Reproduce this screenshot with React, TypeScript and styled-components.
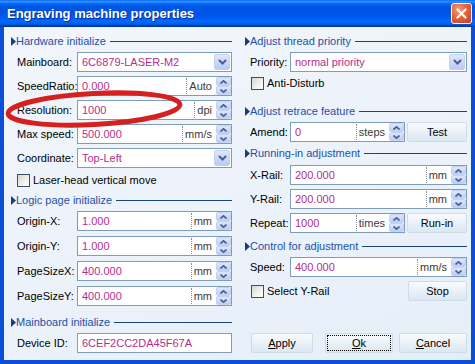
import React from "react";
import styled, { createGlobalStyle } from "styled-components";

const GlobalStyle = createGlobalStyle`
  html, body {
    margin: 0;
    padding: 0;
    background: #fff;
  }
  body {
    font-family: "Liberation Sans", Arial, sans-serif;
    font-size: 11px;
    color: #000;
  }
`;

const Window = styled.div`
  position: relative;
  width: 475px;
  height: 364px;
  display: flex;
  flex-direction: column;
  overflow: hidden;
  background: #0a4fd6;
`;

const TitleBar = styled.div`
  height: 27px;
  flex-shrink: 0;
  display: flex;
  align-items: center;
  justify-content: space-between;
  padding: 0 3px 0 7px;
  background: linear-gradient(
    to bottom,
    #0058ee 0%,
    #3593ff 4%,
    #288eff 7%,
    #127dff 10%,
    #036ffc 13%,
    #0262ee 17%,
    #0057e5 24%,
    #0054e3 30%,
    #0055eb 56%,
    #005bf5 68%,
    #026afe 78%,
    #0062ef 86%,
    #0052d6 92%,
    #0040ab 96%,
    #003092 100%
  );
`;

const Title = styled.span`
  color: #fff;
  font-weight: bold;
  font-size: 13px;
  text-shadow: 1px 1px 0 #0a2a8a;
  white-space: nowrap;
`;

const CloseButton = styled.div`
  width: 21px;
  height: 21px;
  box-sizing: border-box;
  border: 1px solid #fff;
  border-radius: 3px;
  background: radial-gradient(circle at 35% 30%, #f39b7d 0%, #e2643e 45%, #c63c17 100%);
  display: flex;
  align-items: center;
  justify-content: center;
`;

const Client = styled.div`
  flex: 1;
  margin: 0 4px 4px;
  display: grid;
  grid-template-columns: 221px 222px;
  column-gap: 13px;
  padding: 7px 4px 7px 7px;
  background: linear-gradient(160deg, #f2f6fb 0%, #ecf2fa 55%, #e5eef8 100%);
`;

const Column = styled.div`
  display: flex;
  flex-direction: column;
`;

const Stack = styled.div<{ $gap: number }>`
  display: flex;
  flex-direction: column;
  gap: ${({ $gap }) => $gap}px;
`;

const GroupHeader = styled.div<{ $mt?: number; $mb?: number }>`
  display: flex;
  align-items: center;
  height: 14px;
  margin-top: ${({ $mt }) => $mt ?? 0}px;
  margin-bottom: ${({ $mb }) => $mb ?? 4}px;
  color: #1d50a8;
  white-space: nowrap;

  &::after {
    content: "";
    flex: 1;
    height: 1px;
    margin-left: 4px;
    background: #1a4677;
  }
`;

const FieldRow = styled.div<{ $mt?: number }>`
  display: flex;
  align-items: center;
  height: 20px;
  margin-top: ${({ $mt }) => $mt ?? 0}px;
`;

const Label = styled.span<{ $indent: number; $width: number }>`
  flex-shrink: 0;
  padding-left: ${({ $indent }) => $indent}px;
  width: ${({ $width }) => $width}px;
  white-space: nowrap;
`;

const InputBox = styled.div<{ $width?: number }>`
  display: flex;
  align-items: center;
  height: 20px;
  box-sizing: border-box;
  border: 1px solid #7f9db9;
  background: #fff;
  flex: ${({ $width }) => ($width ? `0 0 ${$width}px` : "1")};
`;

const Value = styled.span`
  flex: 1;
  padding-left: 4px;
  color: #b42e8c;
  white-space: nowrap;
  overflow: hidden;
`;

const Unit = styled.span`
  height: 16px;
  line-height: 16px;
  padding: 0 4px 0 2px;
  border-left: 1px dotted #8c8c8c;
  color: #3a3a3a;
  white-space: nowrap;
`;

const Spin = styled.div`
  display: flex;
  flex-direction: column;
  width: 15px;
  height: 18px;
`;

const SpinHalf = styled.div`
  flex: 1;
  box-sizing: border-box;
  border: 1px solid #c2d2f1;
  border-radius: 2px;
  background: linear-gradient(#dde7fc, #bccdf5);
  display: flex;
  align-items: center;
  justify-content: center;
`;

const DropButton = styled.div`
  width: 16px;
  height: 16px;
  margin: 0 1px;
  box-sizing: border-box;
  border: 1px solid #c2d2f1;
  border-radius: 2px;
  background: linear-gradient(#dfe8fc, #b9cbf5);
  display: flex;
  align-items: center;
  justify-content: center;
`;

const CheckRow = styled.div<{ $mt?: number; $indent: number }>`
  display: flex;
  align-items: center;
  gap: 3px;
  height: 14px;
  padding-left: ${({ $indent }) => $indent}px;
  margin-top: ${({ $mt }) => $mt ?? 0}px;
  white-space: nowrap;
`;

const CheckBox = styled.span`
  width: 13px;
  height: 13px;
  box-sizing: border-box;
  border: 1px solid #3c4f66;
  background: linear-gradient(135deg, #d6d6cf 0%, #f2f2ee 60%, #fff 100%);
`;

const ActionRow = styled.div<{ $mt?: number }>`
  display: flex;
  align-items: center;
  justify-content: space-between;
  height: 20px;
  margin-top: ${({ $mt }) => $mt ?? 0}px;
`;

const PushButton = styled.div<{ $width?: number; $ml?: number; $focused?: boolean }>`
  height: 20px;
  box-sizing: border-box;
  flex: ${({ $width }) => ($width ? `0 0 ${$width}px` : "1")};
  margin-left: ${({ $ml }) => $ml ?? 0}px;
  border: 1px solid #cfdce8;
  border-radius: 2px;
  background: linear-gradient(#f8fbfd 0%, #ebf2f8 45%, #dae7f2 100%);
  display: flex;
  align-items: center;
  justify-content: center;
  white-space: nowrap;
  ${({ $focused }) => ($focused ? "outline: 1px dotted #000; outline-offset: -3px;" : "")}
`;

const DialogButtons = styled.div`
  display: flex;
  align-items: center;
  margin-top: auto;
  padding-left: 6px;
`;

const Annotation = styled.svg`
  position: absolute;
  left: 0;
  top: 85px;
  width: 200px;
  height: 50px;
  pointer-events: none;
`;

const Triangle = () => (
  <svg width="5" height="9" viewBox="0 0 5 9" style={{ flexShrink: 0 }}>
    <polygon points="0,0 5,4.5 0,9" fill="#173f80" />
  </svg>
);

const Chevron = ({ up }: { up?: boolean }) => (
  <svg width="7" height="4" viewBox="0 0 7 4">
    <polyline
      points={up ? "0.5,3.5 3.5,0.8 6.5,3.5" : "0.5,0.5 3.5,3.2 6.5,0.5"}
      fill="none"
      stroke="#4a5f8c"
      strokeWidth="1.6"
    />
  </svg>
);

const DownChevron = () => (
  <svg width="9" height="6" viewBox="0 0 9 6">
    <polyline points="1,1 4.5,4.5 8,1" fill="none" stroke="#4a5f8c" strokeWidth="2" />
  </svg>
);

const Header = ({ text, mt, mb }: { text: string; mt?: number; mb?: number }) => (
  <GroupHeader $mt={mt} $mb={mb}>
    <Triangle />
    {text}
  </GroupHeader>
);

type FieldProps = {
  label: string;
  value: string;
  unit?: string;
  kind?: "spin" | "combo" | "plain";
  indent: number;
  labelWidth: number;
  boxWidth?: number;
  mt?: number;
  children?: React.ReactNode;
};

const Field = ({ label, value, unit, kind = "spin", indent, labelWidth, boxWidth, mt, children }: FieldProps) => (
  <FieldRow $mt={mt}>
    <Label $indent={indent} $width={labelWidth}>
      {label}
    </Label>
    <InputBox $width={boxWidth}>
      <Value>{value}</Value>
      {unit && <Unit>{unit}</Unit>}
      {kind === "spin" && (
        <Spin>
          <SpinHalf>
            <Chevron up />
          </SpinHalf>
          <SpinHalf>
            <Chevron />
          </SpinHalf>
        </Spin>
      )}
      {kind === "combo" && (
        <DropButton>
          <DownChevron />
        </DropButton>
      )}
    </InputBox>
    {children}
  </FieldRow>
);

const L = { indent: 6, labelWidth: 60 };
const R = { indent: 5, labelWidth: 40 };

export default function App() {
  return (
    <>
      <GlobalStyle />
      <Window>
        <TitleBar>
          <Title>Engraving machine properties</Title>
          <CloseButton>
            <svg width="11" height="11" viewBox="0 0 11 11">
              <path d="M1.5 1.5 L9.5 9.5 M9.5 1.5 L1.5 9.5" stroke="#fff" strokeWidth="2.2" strokeLinecap="round" />
            </svg>
          </CloseButton>
        </TitleBar>

        <Client>
          <Column>
            <Header text="Hardware initialize" />
            <Stack $gap={4}>
              <Field {...L} label="Mainboard:" value="6C6879-LASER-M2" kind="combo" />
              <Field {...L} label="SpeedRatio:" value="0.000" unit="Auto" />
              <Field {...L} label="Resolution:" value="1000" unit="dpi" />
              <Field {...L} label="Max speed:" value="500.000" unit="mm/s" />
              <Field {...L} label="Coordinate:" value="Top-Left" kind="combo" />
            </Stack>
            <CheckRow $indent={6} $mt={5}>
              <CheckBox />
              Laser-head vertical move
            </CheckRow>

            <Header text="Logic page initialize" mt={6} />
            <Stack $gap={5}>
              <Field {...L} label="Origin-X:" value="1.000" unit="mm" />
              <Field {...L} label="Origin-Y:" value="1.000" unit="mm" />
              <Field {...L} label="PageSizeX:" value="400.000" unit="mm" />
              <Field {...L} label="PageSizeY:" value="400.000" unit="mm" />
            </Stack>

            <Header text="Mainboard initialize" mt={9} />
            <Field {...L} label="Device ID:" value="6CEF2CC2DA45F67A" kind="plain" />
          </Column>

          <Column>
            <Header text="Adjust thread priority" />
            <Field {...R} label="Priority:" value="normal priority" kind="combo" />
            <CheckRow $indent={6} $mt={4}>
              <CheckBox />
              Anti-Disturb
            </CheckRow>

            <Header text="Adjust retrace feature" mt={14} />
            <Field {...R} label="Amend:" value="0" unit="steps" boxWidth={115}>
              <PushButton $ml={2}>Test</PushButton>
            </Field>

            <Header text="Running-in adjustment" mt={4} mb={5} />
            <Stack $gap={4}>
              <Field {...R} label="X-Rail:" value="200.000" unit="mm" />
              <Field {...R} label="Y-Rail:" value="200.000" unit="mm" />
              <Field {...R} label="Repeat:" value="1000" unit="times" boxWidth={115}>
                <PushButton $ml={2}>Run-in</PushButton>
              </Field>
            </Stack>

            <Header text="Control for adjustment" mt={6} />
            <Field {...R} label="Speed:" value="400.000" unit="mm/s" />
            <ActionRow $mt={4}>
              <CheckRow $indent={6}>
                <CheckBox />
                Select Y-Rail
              </CheckRow>
              <PushButton $width={59}>Stop</PushButton>
            </ActionRow>

            <DialogButtons>
              <PushButton $width={62}>
                <u>A</u>pply
              </PushButton>
              <PushButton $width={68} $ml={12} $focused>
                <u>O</u>k
              </PushButton>
              <PushButton $width={68} $ml={6}>
                <u>C</u>ancel
              </PushButton>
            </DialogButtons>
          </Column>
        </Client>

        <Annotation viewBox="0 0 200 50">
          <ellipse
            cx="94"
            cy="24"
            rx="86"
            ry="15.5"
            transform="rotate(-3 94 24)"
            fill="none"
            stroke="#d62020"
            strokeWidth="5"
          />
        </Annotation>
      </Window>
    </>
  );
}
